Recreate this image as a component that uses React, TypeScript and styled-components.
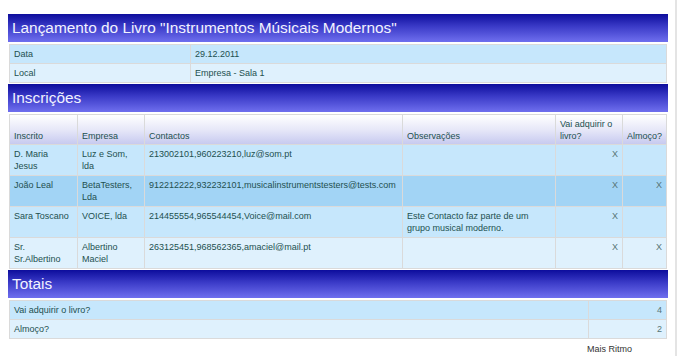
import styled, { createGlobalStyle } from "styled-components";

const GlobalStyle = createGlobalStyle`
    body {
        margin: 8px;
        background: #ffffff;
        font-family: "Liberation Sans", Arial, sans-serif;
    }
`

const Page = styled.div`
    width: 660px;
    padding-top: 6px;
    position: relative;
`

const ScrollEdge = styled.div`
    position: fixed;
    top: 0;
    right: 3px;
    width: 2px;
    height: 100vh;
    background: #e4e4e4;
`

const SectionBar = styled.div`
    height: 28px;
    display: flex;
    align-items: center;
    padding-left: 4px;
    margin-bottom: 2px;
    background: linear-gradient(to bottom, #0d0d9c 0%, #3b3bc8 45%, #6f6fee 100%);
    color: #f2f2ff;
    font-family: "Liberation Sans", Arial, sans-serif;
    font-size: 15.4px;
    white-space: nowrap;
`

const Grid = styled.table`
    width: 658px;
    margin-left: 1px;
    margin-bottom: 1px;
    border-collapse: collapse;
    font-size: 9px;
    color: #22504f;
    & td, & th {
        border: 1px solid #dadada;
        padding: 3px 4px;
        vertical-align: top;
        text-align: left;
        font-weight: normal;
        line-height: 12px;
    }
`

const InfoRow = styled.tr<{ $shade: "mid" | "light" | "dark" }>`
    background: ${p => p.$shade === "dark" ? "#a2d4f5" : p.$shade === "mid" ? "#c6e7fc" : "#dff1fd"};
    & td { height: 12px; padding-top: 3px; padding-bottom: 3px; }
`

const HeadRow = styled.tr`
    background: linear-gradient(to bottom, #ffffff 0%, #e6e7f8 50%, #c5c8ef 100%);
    & th {
        vertical-align: bottom;
        height: 24px;
        padding-bottom: 2px;
    }
`

const DataRow = styled(InfoRow)`
    & td { height: 24px; }
`

const Mark = styled.td`
    && { text-align: right; color: #577575; }
`

const Footer = styled.div`
    margin-top: 5px;
    padding-left: 579px;
    font-size: 9px;
    line-height: 11px;
    color: #333;
`

type Entry = {
    name: string
    company: string
    contacts: string
    notes: string
    book: boolean
    lunch: boolean
    shade: "mid" | "light" | "dark"
}

const entries: Entry[] = [
    { name: "D. Maria Jesus", company: "Luz e Som, lda", contacts: "213002101,960223210,luz@som.pt", notes: "", book: true, lunch: false, shade: "mid" },
    { name: "João Leal", company: "BetaTesters, Lda", contacts: "912212222,932232101,musicalinstrumentstesters@tests.com", notes: "", book: true, lunch: true, shade: "dark" },
    { name: "Sara Toscano", company: "VOICE, lda", contacts: "214455554,965544454,Voice@mail.com", notes: "Este Contacto faz parte de um grupo musical moderno.", book: true, lunch: false, shade: "mid" },
    { name: "Sr. Sr.Albertino", company: "Albertino Maciel", contacts: "263125451,968562365,amaciel@mail.pt", notes: "", book: true, lunch: true, shade: "light" },
]

const App = () => {
    return (
        <Page>
            <GlobalStyle />
            <ScrollEdge />
            <SectionBar>Lançamento do Livro "Instrumentos Músicais Modernos"</SectionBar>
            <Grid>
                <tbody>
                    <InfoRow $shade="mid"><td style={{ width: 172 }}>Data</td><td>29.12.2011</td></InfoRow>
                    <InfoRow $shade="light"><td>Local</td><td>Empresa - Sala 1</td></InfoRow>
                </tbody>
            </Grid>
            <SectionBar>Inscrições</SectionBar>
            <Grid>
                <thead>
                    <HeadRow>
                        <th style={{ width: 59 }}>Inscrito</th>
                        <th style={{ width: 58 }}>Empresa</th>
                        <th style={{ width: 249 }}>Contactos</th>
                        <th style={{ width: 144 }}>Observações</th>
                        <th style={{ width: 58 }}>Vai adquirir o livro?</th>
                        <th>Almoço?</th>
                    </HeadRow>
                </thead>
                <tbody>
                    {entries.map(e => (
                        <DataRow key={e.name} $shade={e.shade}>
                            <td>{e.name}</td>
                            <td>{e.company}</td>
                            <td>{e.contacts}</td>
                            <td>{e.notes}</td>
                            <Mark>{e.book ? "X" : ""}</Mark>
                            <Mark>{e.lunch ? "X" : ""}</Mark>
                        </DataRow>
                    ))}
                </tbody>
            </Grid>
            <SectionBar>Totais</SectionBar>
            <Grid>
                <tbody>
                    <InfoRow $shade="mid"><td>Vai adquirir o livro?</td><Mark style={{ width: 69 }}>4</Mark></InfoRow>
                    <InfoRow $shade="light"><td>Almoço?</td><Mark>2</Mark></InfoRow>
                </tbody>
            </Grid>
            <Footer>Mais Ritmo</Footer>
        </Page>
    );
}

export default App;
